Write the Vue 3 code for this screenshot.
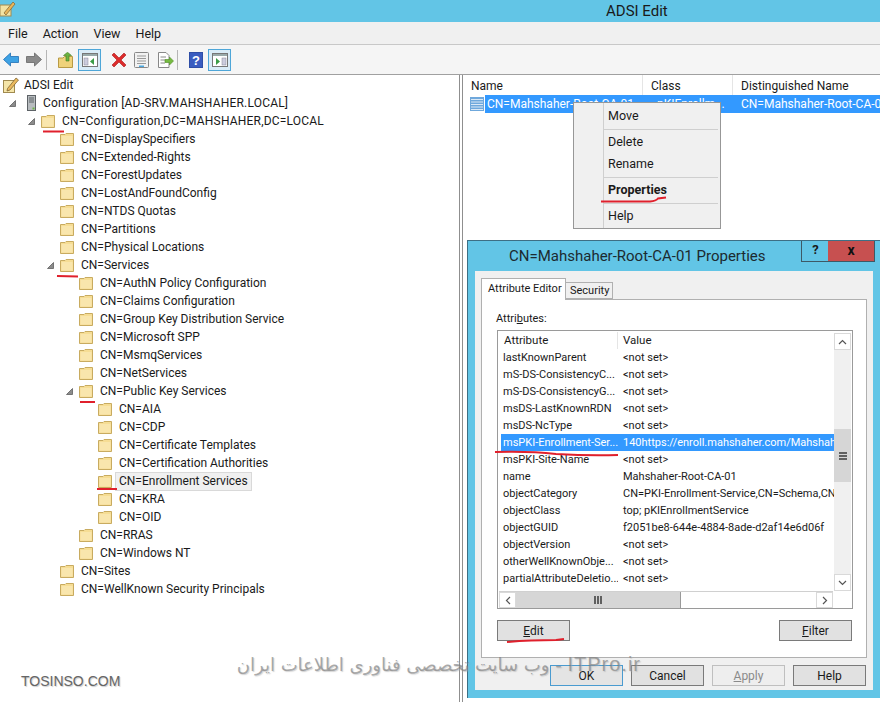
<script setup>
const tree = [
  { t: 'ADSI Edit', l: 0, icon: 'app' },
  { t: 'Configuration [AD-SRV.MAHSHAHER.LOCAL]', l: 1, icon: 'server', open: true, wide: true },
  { t: 'CN=Configuration,DC=MAHSHAHER,DC=LOCAL', l: 2, open: true, wide: true },
  { t: 'CN=DisplaySpecifiers', l: 3 },
  { t: 'CN=Extended-Rights', l: 3 },
  { t: 'CN=ForestUpdates', l: 3 },
  { t: 'CN=LostAndFoundConfig', l: 3 },
  { t: 'CN=NTDS Quotas', l: 3 },
  { t: 'CN=Partitions', l: 3 },
  { t: 'CN=Physical Locations', l: 3 },
  { t: 'CN=Services', l: 3, open: true },
  { t: 'CN=AuthN Policy Configuration', l: 4 },
  { t: 'CN=Claims Configuration', l: 4 },
  { t: 'CN=Group Key Distribution Service', l: 4 },
  { t: 'CN=Microsoft SPP', l: 4 },
  { t: 'CN=MsmqServices', l: 4 },
  { t: 'CN=NetServices', l: 4 },
  { t: 'CN=Public Key Services', l: 4, open: true },
  { t: 'CN=AIA', l: 5 },
  { t: 'CN=CDP', l: 5 },
  { t: 'CN=Certificate Templates', l: 5 },
  { t: 'CN=Certification Authorities', l: 5 },
  { t: 'CN=Enrollment Services', l: 5, sel: true },
  { t: 'CN=KRA', l: 5 },
  { t: 'CN=OID', l: 5 },
  { t: 'CN=RRAS', l: 4 },
  { t: 'CN=Windows NT', l: 4 },
  { t: 'CN=Sites', l: 3 },
  { t: 'CN=WellKnown Security Principals', l: 3 }
]
const attrs = [
  ['lastKnownParent', '<not set>'],
  ['mS-DS-ConsistencyC...', '<not set>'],
  ['mS-DS-ConsistencyG...', '<not set>'],
  ['msDS-LastKnownRDN', '<not set>'],
  ['msDS-NcType', '<not set>'],
  ['msPKI-Enrollment-Ser...', '140https://enroll.mahshaher.com/Mahshaher', true],
  ['msPKI-Site-Name', '<not set>'],
  ['name', 'Mahshaher-Root-CA-01'],
  ['objectCategory', 'CN=PKI-Enrollment-Service,CN=Schema,CN=C'],
  ['objectClass', 'top; pKIEnrollmentService'],
  ['objectGUID', 'f2051be8-644e-4884-8ade-d2af14e6d06f'],
  ['objectVersion', '<not set>'],
  ['otherWellKnownObje...', '<not set>'],
  ['partialAttributeDeletio...', '<not set>']
]
const menuGroups = [
  [{ t: 'Move' }],
  [{ t: 'Delete' }, { t: 'Rename' }],
  [{ t: 'Properties', bold: true }],
  [{ t: 'Help' }]
]
</script>

<template>
  <div class="window">
    <header class="titlebar">
      <svg class="app-mini" width="16" height="16" viewBox="0 0 16 16">
        <rect x="0" y="4" width="11" height="11" fill="#f3e3a4" stroke="#a08a50" />
        <path d="M4 12 L13 1 L15 3 L6 14 Z" fill="#e9b65a" stroke="#7a6030" stroke-width=".7" />
      </svg>
      <span class="title">ADSI Edit</span>
    </header>
    <nav class="menubar">
      <span>File</span><span>Action</span><span>View</span><span>Help</span>
    </nav>
    <div class="toolbar">
      <svg width="16" height="15" viewBox="0 0 16 15"><path d="M0.5 7.5 L7.5 1 V4.5 H15.5 V10.5 H7.5 V14 Z" fill="#3ea2e4" stroke="#1f6fb5" stroke-width=".8" /></svg>
      <svg class="fwd" width="16" height="15" viewBox="0 0 16 15"><path d="M15.5 7.5 L8.5 1 V4.5 H.5 V10.5 H8.5 V14 Z" fill="#8a8a8a" stroke="#666" stroke-width=".8" /></svg>
      <i class="tsep first"></i>
      <svg class="up" width="15" height="16" viewBox="0 0 15 16">
        <path d="M.5 6 H5 L6.5 4.5 H14.5 V15.5 H.5 Z" fill="#efd27a" stroke="#b89a45" />
        <path d="M8 9 V3.5 H5.5 L9.5 .3 L13.5 3.5 H11 V9 Z" fill="#6cb33f" stroke="#3f7d20" stroke-width=".6" />
      </svg>
      <span class="tbtn b1">
        <svg width="16" height="14" viewBox="0 0 16 14">
          <rect x=".5" y=".5" width="15" height="13" fill="#fff" stroke="#777" /><rect x="1" y="1" width="14" height="2" fill="#9aa" />
          <rect x="2" y="5" width="4" height="7" fill="#ccd" stroke="#889" stroke-width=".5" />
          <path d="M12 5 V12 L8 8.5 Z" fill="#3b9c46" />
        </svg>
      </span>
      <svg class="del" width="16" height="16" viewBox="0 0 16 16"><path d="M1 3 L3 1 L8 6 L13 1 L15 3 L10 8 L15 13 L13 15 L8 10 L3 15 L1 13 L6 8 Z" fill="#dd2b2b" stroke="#a81818" stroke-width=".6" /></svg>
      <svg class="prop" width="15" height="16" viewBox="0 0 15 16">
        <rect x=".5" y=".5" width="14" height="15" rx="1" fill="#f2f2f2" stroke="#888" />
        <path d="M3 4 H12 M3 6.5 H12 M3 9 H12 M3 11.5 H12" stroke="#999" /><rect x="5" y="13.5" width="5" height="1.5" fill="#49a7e0" />
      </svg>
      <svg class="exp" width="17" height="16" viewBox="0 0 17 16">
        <path d="M1.5 .5 H9 L12 3.5 V15.5 H1.5 Z" fill="#fff" stroke="#888" /><path d="M3.5 5 H9 M3.5 8 H8 M3.5 11 H8" stroke="#888" />
        <path d="M8 7.5 H12.5 V5 L16.5 9 L12.5 13 V10.5 H8 Z" fill="#76bb42" stroke="#4d8c22" stroke-width=".6" />
      </svg>
      <i class="tsep second"></i>
      <svg class="help" width="14" height="16" viewBox="0 0 14 16">
        <rect width="14" height="16" fill="#2f4ea6" /><rect x="1" y="1" width="12" height="14" fill="#3a5cc0" />
        <text x="7" y="13" text-anchor="middle" class="qmark">?</text>
      </svg>
      <span class="tbtn b2">
        <svg width="16" height="14" viewBox="0 0 16 14">
          <rect x=".5" y=".5" width="15" height="13" fill="#fff" stroke="#777" /><rect x="1" y="1" width="14" height="2" fill="#9aa" />
          <path d="M4 5 V12 L8 8.5 Z" fill="#3b9c46" />
          <rect x="10" y="5" width="4" height="7" fill="#ccd" stroke="#889" stroke-width=".5" />
        </svg>
      </span>
    </div>
    <main class="panes">
      <section class="tree">
        <div v-for="row in tree" :key="row.t" class="row" :class="'lv' + row.l">
          <svg v-if="row.open" class="arrow" width="7" height="7" viewBox="0 0 7 7"><path d="M6.5 .5 V6.5 H.5 Z" fill="#8c8c8c" stroke="#505050" stroke-width=".7" /></svg>
          <svg v-if="row.icon === 'app'" class="ico" width="16" height="16" viewBox="0 0 16 16">
            <rect x=".5" y="3.5" width="11" height="12" fill="#f5e5a8" stroke="#a08a50" />
            <path d="M4.5 11.5 L13 1 L15.5 3 L7 13 L4 14 Z" fill="#eab95e" stroke="#72592a" stroke-width=".7" />
          </svg>
          <svg v-else-if="row.icon === 'server'" class="ico srv" width="9" height="16" viewBox="0 0 9 16">
            <rect x=".5" y=".5" width="8" height="15" fill="#b8bcbf" stroke="#5d6266" />
            <path d="M2 3 H7 M2 5 H7 M2 7 H7" stroke="#5d6266" /><rect x="5.5" y="12.5" width="2" height="2" fill="#6bb347" />
          </svg>
          <svg v-else class="ico" width="14" height="14" viewBox="0 0 14 14">
            <path d="M.5 2.5 V13.5 H13.5 V1.5 H6 L5 2.5 Z" fill="#f6dd94" stroke="#c8ab60" />
            <rect x="1.5" y="4" width="11" height="8.5" fill="#f9e6ad" />
          </svg>
          <span class="label" :class="{ selected: row.sel, wide: row.wide }">{{ row.t }}</span>
        </div>
      </section>
      <section class="list">
        <div class="list-head">
          <span class="c-name">Name</span><span class="c-class">Class</span><span class="c-dn">Distinguished Name</span>
        </div>
        <div class="list-row">
          <svg width="14" height="14" viewBox="0 0 14 14">
            <rect width="14" height="14" fill="#6fa8dc" /><path d="M1 2.5 H13 M1 5 H13 M1 7.5 H13 M1 10 H13 M1 12.5 H13" stroke="#dbe9f7" />
          </svg>
          <div class="list-sel">
            <span class="s-name">CN=Mahshaher-Root-CA-01</span><span class="s-class">pKIEnrollm...</span><span class="s-dn">CN=Mahshaher-Root-CA-01,CN=Enroll</span>
          </div>
        </div>
      </section>
    </main>

    <div class="ctx">
      <template v-for="(g, i) in menuGroups" :key="i">
        <i v-if="i" class="msep"></i>
        <div v-for="it in g" :key="it.t" class="mitem" :class="{ bold: it.bold }">{{ it.t }}</div>
      </template>
    </div>

    <div class="dialog">
      <div class="dlg-title">
        <span class="dlg-text">CN=Mahshaher-Root-CA-01 Properties</span>
        <span class="cap-help">?</span>
        <span class="cap-close">x</span>
      </div>
      <div class="client">
        <div class="tabs">
          <span class="tab on">Attribute Editor</span><span class="tab">Security</span>
        </div>
        <div class="page">
          <div class="attr-label">Attri<u>b</u>utes:</div>
          <div class="attr-box">
            <div class="attr-main">
              <div class="attr-head">
                <span class="h1">Attribute</span><span class="h2">Value</span>
              </div>
              <div v-for="a in attrs" :key="a[0]" class="attr-row" :class="{ on: a[2] }">
                <span class="a1">{{ a[0] }}</span><span class="a2">{{ a[1] }}</span>
              </div>
            </div>
            <div class="vscroll">
              <span class="sbtn">
                <svg width="9" height="6" viewBox="0 0 9 6"><path d="M1 5 L4.5 1.5 L8 5" fill="none" stroke="#555" stroke-width="1.2" /></svg>
              </span>
              <span class="vtrack">
                <span class="vthumb"><i></i><i></i><i></i></span>
              </span>
              <span class="sbtn">
                <svg width="9" height="6" viewBox="0 0 9 6"><path d="M1 1 L4.5 4.5 L8 1" fill="none" stroke="#555" stroke-width="1.2" /></svg>
              </span>
            </div>
            <div class="hscroll">
              <span class="sbtn hb">
                <svg width="6" height="9" viewBox="0 0 6 9"><path d="M5 1 L1.5 4.5 L5 8" fill="none" stroke="#555" stroke-width="1.2" /></svg>
              </span>
              <span class="htrack">
                <span class="hthumb"><i></i><i></i><i></i></span>
              </span>
              <span class="sbtn hb">
                <svg width="6" height="9" viewBox="0 0 6 9"><path d="M1 1 L4.5 4.5 L1 8" fill="none" stroke="#555" stroke-width="1.2" /></svg>
              </span>
            </div>
          </div>
          <div class="page-btns">
            <button class="btn"><u>E</u>dit</button>
            <button class="btn"><u>F</u>ilter</button>
          </div>
        </div>
        <div class="dlg-btns">
          <button class="btn default">OK</button>
          <button class="btn">Cancel</button>
          <button class="btn disabled"><u>A</u>pply</button>
          <button class="btn">Help</button>
        </div>
      </div>
    </div>

    <svg class="marks" width="880" height="702" viewBox="0 0 880 702" fill="none" stroke="#e0202c" stroke-width="2">
      <path d="M43 131.5 H64" />
      <path d="M57 276 L78 276.5" />
      <path d="M80 402 H95" />
      <path d="M97 489 H117" />
      <path d="M601 201.5 H650 Q656 201 658 198.5 L666 197.5" />
      <path d="M495 452 Q530 451 556 454 Q590 456 618 455" />
      <path d="M507 642 Q530 640 556 640 L564 639" />
    </svg>
    <div class="wm" dir="rtl"><span class="wm-en">ITPro.ir</span> - وب سایت تخصصی فناوری اطلاعات ایران</div>
    <div class="tosinso">TOSINSO.COM</div>
  </div>
</template>

<style scoped>
.window {
  position: relative;
  width: 880px;
  height: 702px;
  overflow: hidden;
  background: #fff;
  color: #1a1a1a;
  font-family: Roboto, "Open Sans", sans-serif;
  font-size: 12px;
  display: flex;
  flex-direction: column;
}
.titlebar {
  height: 22px;
  background: #62c5e6;
  display: flex;
  align-items: center;
  position: relative;
}
.app-mini { margin-top: -4px; }
.title {
  position: absolute;
  left: 606px;
  top: 1px;
  font-size: 15px;
  line-height: 21px;
}
.menubar {
  height: 22px;
  background: #f0f0f0;
  border-bottom: 1px solid #c8c8c8;
  display: flex;
  align-items: center;
  padding-left: 8px;
  gap: 15px;
  font-size: 12.5px;
}
.toolbar {
  height: 29px;
  background: #f5f5f5;
  border-bottom: 1px solid #a0a0a0;
  display: flex;
  align-items: center;
  padding-left: 3px;
}
.fwd { margin-left: 7px; }
.tsep { width: 1px; height: 20px; background: #b5b5b5; }
.tsep.first { margin-left: 4px; }
.up { margin-left: 11px; }
.tbtn {
  width: 23px;
  height: 22px;
  box-sizing: border-box;
  border: 1px solid #4ea6d8;
  background: #d9ecf7;
  display: flex;
  align-items: center;
  justify-content: center;
}
.b1 { margin-left: 5px; }
.del { margin-left: 10px; }
.prop { margin-left: 7px; }
.exp { margin-left: 8px; }
.tsep.second { margin-left: 3px; }
.help { margin-left: 11px; }
.qmark { fill: #fff; font: bold 13px "Liberation Sans", sans-serif; }
.b2 { margin-left: 5px; }
.panes {
  flex: 1;
  display: flex;
  min-height: 0;
}
.tree {
  width: 460px;
  border-right: 1px solid #8f8f8f;
  padding-top: 1px;
  box-sizing: border-box;
}
.row {
  height: 18px;
  position: relative;
  display: flex;
  align-items: center;
  white-space: nowrap;
}
.arrow { position: absolute; top: 6px; }
.ico { flex: none; }
.label { padding: 0 3px; line-height: 17px; height: 17px; box-sizing: border-box; }
.label.selected { background: #f0f0f0; outline: 1px solid #d9d9d9; }
.label.wide { letter-spacing: .2px; }
.lv0 { padding-left: 3px; }
.lv0 .label { margin-left: 2px; }
.lv1 { padding-left: 27px; }
.lv1 .arrow { left: 9px; }
.lv1 .label { margin-left: 4px; }
.lv2 { padding-left: 41px; }
.lv2 .arrow { left: 28px; }
.lv3 { padding-left: 60px; }
.lv3 .arrow { left: 47px; }
.lv4 { padding-left: 79px; }
.lv4 .arrow { left: 66px; }
.lv5 { padding-left: 98px; }
.lv2 .label, .lv3 .label, .lv4 .label, .lv5 .label { margin-left: 4px; }
.list {
  margin-left: 2px;
  flex: 1;
  border-left: 1px solid #8f8f8f;
  min-width: 0;
}
.list-head {
  height: 20px;
  display: flex;
  align-items: center;
  position: relative;
}
.list-head span {
  box-sizing: border-box;
  line-height: 22px;
  height: 20px;
  padding-left: 8px;
  border-right: 1px solid #e5e5e5;
}
.c-name { width: 180px; }
.c-class { width: 90px; }
.c-dn { flex: 1; border-right: 0 !important; }
.list-row {
  display: flex;
  align-items: center;
  height: 18px;
  padding-left: 7px;
}
.list-sel {
  flex: none;
  width: 395px;
  margin-left: 1px;
  height: 18px;
  line-height: 18px;
  background: #3399ff;
  color: #fff;
  display: flex;
  white-space: nowrap;
  overflow: hidden;
  padding-left: 2px;
  box-sizing: border-box;
}
.s-name { width: 170px; flex: none; overflow: hidden; }
.s-class { width: 84px; flex: none; }
.ctx {
  position: absolute;
  left: 573px;
  top: 102px;
  width: 148px;
  height: 127px;
  box-sizing: border-box;
  border: 1px solid #979797;
  background: linear-gradient(to right, #f0f0f0 29px, #cfcfcf 29px, #cfcfcf 30px, #f0f0f0 30px);
  padding-top: 2px;
  font-size: 12.5px;
}
.mitem {
  height: 22px;
  line-height: 22px;
  padding-left: 34px;
}
.mitem.bold { font-weight: 700; }
.msep {
  display: block;
  height: 1px;
  background: #cfcfcf;
  margin: 2px 2px 1px 30px;
}
.dialog {
  position: absolute;
  left: 467px;
  top: 240px;
  width: 420px;
  height: 458px;
  box-sizing: border-box;
  background: #62c5e6;
  border: 1px solid #3d6f85;
  border-right: 0;
  border-bottom: 0;
  display: flex;
  flex-direction: column;
}
.dlg-title {
  height: 30px;
  position: relative;
  display: flex;
  align-items: center;
}
.dlg-text {
  margin-left: 41px;
  font-size: 15px;
  line-height: 30px;
  color: #1c2a30;
  white-space: nowrap;
}
.cap-help, .cap-close {
  position: absolute;
  top: 0;
  height: 20px;
  line-height: 18px;
  text-align: center;
  font-weight: 700;
  border: 1px solid #3d5966;
  border-top: 0;
}
.cap-help { left: 333px; width: 27px; background: #62c5e6; font-size: 13px; }
.cap-close { left: 360px; width: 46px; background: #c75050; font-size: 14px; border-left: 0; color: #111; }
.client {
  width: 398px;
  margin-left: 7px;
  height: 419px;
  box-sizing: border-box;
  background: #f0f0f0;
  padding: 7px 6px 0;
  position: relative;
}
.tabs {
  display: flex;
  align-items: flex-end;
  height: 21px;
  position: relative;
  z-index: 1;
}
.tab {
  height: 17px;
  line-height: 16px;
  padding: 0 4px;
  box-sizing: border-box;
  border: 1px solid #b0b0b0;
  background: #f0f0f0;
  font-size: 11px;
}
.tab.on {
  height: 22px;
  line-height: 20px;
  padding: 0 6px;
  background: #fff;
  border-bottom: 0;
  margin-bottom: -1px;
  width: 85px;
  white-space: nowrap;
}
.tab:not(.on) { border-left: 0; width: 47px; }
.page {
  width: 386px;
  height: 359px;
  box-sizing: border-box;
  border: 1px solid #b0b0b0;
  background: #fff;
  padding: 11px 0 0 14px;
}
.attr-label { line-height: 16px; font-size: 11px; }
.attr-box {
  margin: 3px 0 0 1px;
  width: 356px;
  height: 279px;
  box-sizing: border-box;
  border: 1px solid #9a9a9a;
  padding: 1px;
  position: relative;
}
.attr-main {
  width: 335px;
  height: 258px;
  overflow: hidden;
  padding-left: 2px;
  box-sizing: border-box;
  font-size: 11px;
}
.attr-head {
  display: flex;
  height: 17px;
  line-height: 16px;
  margin-left: -2px;
  font-size: 11.5px;
}
.h1 { width: 119px; padding-left: 5px; box-sizing: border-box; border-right: 1px solid #e5e5e5; }
.h2 { padding-left: 5px; }
.attr-row {
  display: flex;
  height: 17px;
  line-height: 17px;
  white-space: nowrap;
}
.attr-row.on { background: #3399ff; color: #fff; }
.a1 { width: 117px; flex: none; padding-left: 2px; box-sizing: border-box; overflow: hidden; }
.a2 { flex: none; width: 216px; padding-left: 5px; box-sizing: border-box; overflow: hidden; }
.vscroll {
  position: absolute;
  left: 336px;
  top: 2px;
  width: 17px;
  height: 258px;
  display: flex;
  flex-direction: column;
  background: #f0f0f0;
}
.sbtn {
  flex: none;
  height: 17px;
  display: flex;
  align-items: center;
  justify-content: center;
  background: #fff;
  box-sizing: border-box;
  border: 1px solid #d9d9d9;
}
.vtrack { flex: 1; display: block; padding-top: 79px; }
.vthumb {
  height: 53px;
  display: flex;
  flex-direction: column;
  gap: 1px;
  align-items: center;
  justify-content: center;
  background: #d6d6d6;
}
.vthumb i { width: 8px; height: 1px; background: #606060; border-bottom: 1px solid #606060; }
.hscroll {
  position: absolute;
  left: 1px;
  top: 260px;
  width: 334px;
  height: 17px;
  display: flex;
  background: #f0f0f0;
  border-top: 1px solid #d0d0d0;
  box-sizing: border-box;
}
.hb { width: 17px; height: 16px; }
.htrack { flex: 1; display: block; background: #fff; }
.hthumb {
  width: 165px;
  height: 100%;
  display: flex;
  gap: 1px;
  align-items: center;
  justify-content: center;
  background: #d6d6d6;
  border-right: 1px solid #9a9a9a;
  box-sizing: border-box;
}
.hthumb i { width: 2px; height: 8px; background: #606060; }
.page-btns {
  margin: 11px 0 0 1px;
  width: 355px;
  display: flex;
  justify-content: space-between;
}
.btn {
  width: 73px;
  height: 21px;
  padding: 0;
  box-sizing: border-box;
  border: 1px solid #7a7a7a;
  background: #e1e1e1;
  color: #1a1a1a;
  font: 12px Roboto, "Open Sans", sans-serif;
  line-height: 18px;
}
.dlg-btns {
  margin-top: 7px;
  display: flex;
  gap: 8px;
  padding-left: 69px;
}
.btn.default { border: 1px solid #4a9bd0; background: #e4e4e4; }
.btn.disabled { border-color: #bfbfbf; background: #eee; color: #8a8a8a; }
.marks { position: absolute; left: 0; top: 0; pointer-events: none; }
.wm {
  position: absolute;
  left: 240px;
  top: 649px;
  width: 401px;
  font-family: "DejaVu Sans", sans-serif;
  font-size: 18px;
  line-height: 30px;
  color: rgba(120, 120, 120, .62);
  text-shadow: 1px 1px 1px rgba(170, 170, 170, .5);
  white-space: nowrap;
}
.wm-en { font-family: "Liberation Sans", sans-serif; font-size: 20px; letter-spacing: 1px; }
.tosinso {
  position: absolute;
  left: 21px;
  top: 673px;
  font-family: "Liberation Sans", sans-serif;
  font-size: 14px;
  line-height: 16px;
  color: #666;
  text-shadow: 1px 1px 1px #ccc;
}
</style>
